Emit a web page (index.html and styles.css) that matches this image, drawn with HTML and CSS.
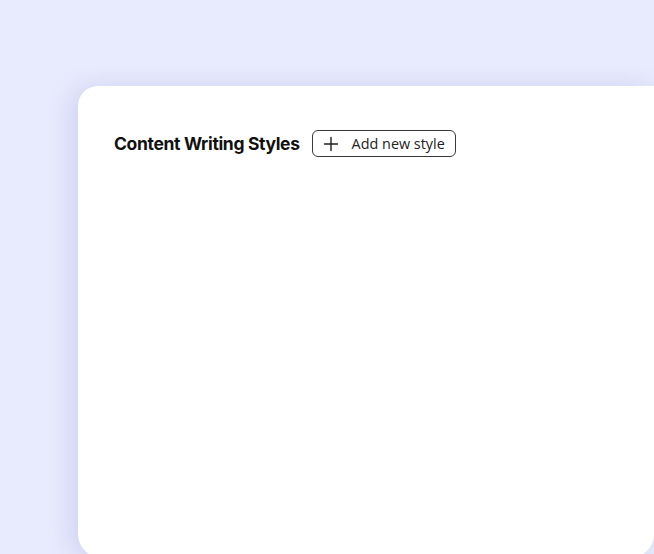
FILE: index.html
```html
<!DOCTYPE html>
<html lang="en">
<head>
<meta charset="utf-8">
<title>Content Writing Styles</title>
<link rel="stylesheet" href="styles.css">
</head>
<body>
  <main class="card">
    <header class="card-header">
      <h1 class="title">Content Writing Styles</h1>
      <button class="add-btn" type="button">
        <svg class="plus" width="16" height="16" viewBox="0 0 16 16" aria-hidden="true">
          <path d="M8 1.5v13M1.5 8h13" stroke="#1f1f1f" stroke-width="1.4" stroke-linecap="round" fill="none"/>
        </svg>
        <span>Add new style</span>
      </button>
    </header>
  </main>
</body>
</html>
```

FILE: styles.css
```css
html, body {
  margin: 0;
  padding: 0;
}
body {
  background: #e8eafd;
  width: 654px;
  height: 554px;
  overflow: hidden;
  padding-top: 86px;
  padding-left: 78px;
  box-sizing: border-box;
  font-family: Inter, "Liberation Sans", sans-serif;
}
.card {
  width: 576px;
  height: 472px;
  background: #ffffff;
  border-radius: 20px 0 24px 24px;
  box-shadow: -6px 2px 24px rgba(120, 125, 190, 0.22);
  padding: 44px 0 0 36px;
  box-sizing: border-box;
}
.card-header {
  display: flex;
  align-items: center;
  gap: 12px;
}
.title {
  margin: 0;
  font-size: 17.5px;
  font-weight: 700;
  letter-spacing: -0.35px;
  color: #111111;
}
.add-btn {
  display: flex;
  align-items: center;
  gap: 13px;
  height: 27px;
  padding: 0 10px 0 10px;
  border: 1px solid #3a3a3a;
  border-radius: 6px;
  background: #ffffff;
  font-family: "Open Sans", "Liberation Sans", sans-serif;
  font-size: 14.4px;
  color: #222222;
  cursor: pointer;
}
.plus {
  display: block;
}
```
